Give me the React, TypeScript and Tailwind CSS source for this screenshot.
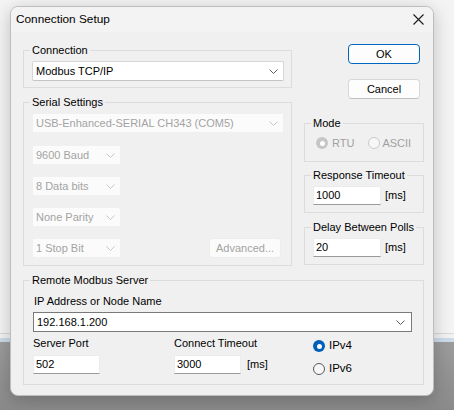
import type {ReactNode} from 'react';

const FONT = {fontFamily: '"Liberation Sans", Arial, sans-serif'};

function Chevron({disabled}: {disabled?: boolean}) {
    return (
        <svg width="9" height="5" viewBox="0 0 9 5" className="flex-shrink-0">
            <path d="M0.5 0.5 L4.5 4.5 L8.5 0.5" fill="none" stroke={disabled ? '#c8c8c8' : '#5c5c5c'} strokeWidth="1" />
        </svg>
    );
}

function Select({text, width, disabled}: {text: string; width: string; disabled?: boolean}) {
    return (
        <div
            className={`${width} h-[20px] flex items-center justify-between pl-[3px] pr-[5px] rounded-[2px] border ${
                disabled ? 'bg-[#fbfbfb] border-[#f0f0f0] text-[#a3a3a3]' : 'bg-white border-[#d6d6d6] border-b-[#c4c4c4] text-black'
            }`}
        >
            <span className="whitespace-nowrap">{text}</span>
            <Chevron disabled={disabled} />
        </div>
    );
}

function Edit({value, width}: {value: string; width: string}) {
    return (
        <div className={`${width} h-[19px] flex items-center pl-[2px] bg-white border border-[#ececec] border-b-[#9a9a9a]`}>
            {value}
        </div>
    );
}

function Radio({checked, disabled}: {checked?: boolean; disabled?: boolean}) {
    if (checked) {
        return (
            <span className={`w-[12px] h-[12px] flex-shrink-0 rounded-full flex items-center justify-center ${disabled ? 'bg-[#c6c6c6]' : 'bg-[#005fb8]'}`}>
                <span className="w-[5px] h-[5px] rounded-full bg-white" />
            </span>
        );
    }
    return (
        <span
            className={`block w-[12px] h-[12px] flex-shrink-0 rounded-full border ${disabled ? 'border-[#cacaca] bg-[#f7f7f7]' : 'border-[#5a5a5a] bg-[#f6f6f6]'}`}
        />
    );
}

function Group({label, className, children}: {label: string; className?: string; children: ReactNode}) {
    return (
        <fieldset className={`border border-[#dcdcdc] p-0 m-0 min-w-0 ${className ?? ''}`}>
            <legend className="ml-[6px] px-[2px] leading-[13px] text-black">{label}</legend>
            {children}
        </fieldset>
    );
}

export default function App() {
    return (
        <div className="relative w-[454px] h-[410px] overflow-hidden text-[11px]" style={FONT}>
            {/* desktop behind the dialog */}
            <div className="flex flex-col h-full">
                <div className="h-[333px] bg-[#f4f4f4]" />
                <div className="h-[1px] bg-[#d9d9d9]" />
                <div className="h-[4px] bg-[#f2f2f2]" />
                <div className="h-[4px] bg-[#cddbea]" />
                <div className="flex-1 bg-gradient-to-b from-[#9c9c9c] to-[#8a8a8a]" />
            </div>

            {/* dialog window */}
            <div className="absolute left-[10px] top-[6px] w-[424px] h-[390px] rounded-[8px] border border-[#bdbdbd] bg-[#f0f0f0] shadow-[0_4px_18px_rgba(0,0,0,0.22)] overflow-hidden flex flex-col">
                <div className="h-[25px] flex items-center justify-between pl-[5px] pr-[9px] bg-[#f3f3f3]">
                    <span className="text-[11.8px] text-black">Connection Setup</span>
                    <svg width="11" height="11" viewBox="0 0 11 11">
                        <path d="M0.5 0.5 L10.5 10.5 M10.5 0.5 L0.5 10.5" stroke="#1a1a1a" strokeWidth="1.1" />
                    </svg>
                </div>

                <div className="flex flex-col pl-[12px] pt-[12px]">
                    <div className="flex">
                        {/* left column */}
                        <div className="w-[269px] flex flex-col">
                            <Group label="Connection">
                                <div className="pl-[8px] pt-[4px] pb-[6px]">
                                    <Select text="Modbus TCP/IP" width="w-[252px]" />
                                </div>
                            </Group>
                            <Group label="Serial Settings" className="mt-[8px]">
                                <div className="pl-[8px] pr-[9px] pt-[4px] pb-[7px] flex flex-col">
                                    <Select text="USB-Enhanced-SERIAL CH343 (COM5)" width="w-[252px]" disabled />
                                    <div className="mt-[12px] flex flex-col gap-[11px]">
                                        <Select text="9600 Baud" width="w-[89px]" disabled />
                                        <Select text="8 Data bits" width="w-[89px]" disabled />
                                        <Select text="None Parity" width="w-[89px]" disabled />
                                        <div className="flex items-center justify-between">
                                            <Select text="1 Stop Bit" width="w-[89px]" disabled />
                                            <div className="w-[72px] h-[20px] mr-[1px] flex items-center justify-center rounded-[3px] border border-[#ececec] bg-[#fbfbfb] text-[#a3a3a3]">
                                                Advanced...
                                            </div>
                                        </div>
                                    </div>
                                </div>
                            </Group>
                        </div>

                        {/* right column */}
                        <div className="ml-[12px] w-[120px] flex flex-col">
                            <div className="ml-[44px] w-[72px] h-[20px] flex items-center justify-center rounded-[4px] border border-[#0067c0] bg-[#fdfdfd] text-black">
                                OK
                            </div>
                            <div className="mt-[15px] ml-[44px] w-[72px] h-[20px] flex items-center justify-center rounded-[4px] border border-[#d8d8d8] border-b-[#c0c0c0] bg-[#fdfdfd] text-black">
                                Cancel
                            </div>
                            <Group label="Mode" className="mt-[18px]">
                                <div className="pl-[11px] pt-[6px] pb-[11px] flex items-center h-[31px] text-[#a0a0a0]">
                                    <Radio checked disabled />
                                    <span className="ml-[4px]">RTU</span>
                                    <span className="ml-[14px] flex items-center">
                                        <Radio disabled />
                                    </span>
                                    <span className="ml-[2px]">ASCII</span>
                                </div>
                            </Group>
                            <Group label="Response Timeout" className="mt-[7px]">
                                <div className="pl-[8px] pt-[4px] pb-[7px] flex items-center">
                                    <Edit value="1000" width="w-[68px]" />
                                    <span className="ml-[4px] text-black">[ms]</span>
                                </div>
                            </Group>
                            <Group label="Delay Between Polls" className="mt-[8px]">
                                <div className="pl-[8px] pt-[4px] pb-[7px] flex items-center">
                                    <Edit value="20" width="w-[68px]" />
                                    <span className="ml-[4px] text-black">[ms]</span>
                                </div>
                            </Group>
                        </div>
                    </div>

                    <Group label="Remote Modbus Server" className="mt-[8px] w-[401px]">
                        <div className="pl-[9px] pr-[11px] pt-[8px] pb-[9px] flex flex-col">
                            <span className="pl-[1px] leading-[13px]">IP Address or Node Name</span>
                            <div className="mt-[4px] h-[20px] flex items-center justify-between pl-[3px] pr-[6px] bg-white border border-[#7a7a7a]">
                                <span>192.168.1.200</span>
                                <Chevron />
                            </div>
                            <div className="mt-[5px] flex">
                                <div className="w-[141px] flex flex-col">
                                    <span className="leading-[13px]">Server Port</span>
                                    <Edit value="502" width="w-[67px] mt-[5px]" />
                                </div>
                                <div className="w-[139px] flex flex-col">
                                    <span className="leading-[13px]">Connect Timeout</span>
                                    <div className="mt-[5px] flex items-center">
                                        <Edit value="3000" width="w-[67px]" />
                                        <span className="ml-[6px]">[ms]</span>
                                    </div>
                                </div>
                                <div className="pt-[3px] flex flex-col gap-[11px]">
                                    <div className="flex items-center h-[12px]">
                                        <Radio checked />
                                        <span className="ml-[4px] text-[11.5px]">IPv4</span>
                                    </div>
                                    <div className="flex items-center h-[12px]">
                                        <Radio />
                                        <span className="ml-[4px] text-[11.5px]">IPv6</span>
                                    </div>
                                </div>
                            </div>
                        </div>
                    </Group>
                </div>
            </div>
        </div>
    );
}
